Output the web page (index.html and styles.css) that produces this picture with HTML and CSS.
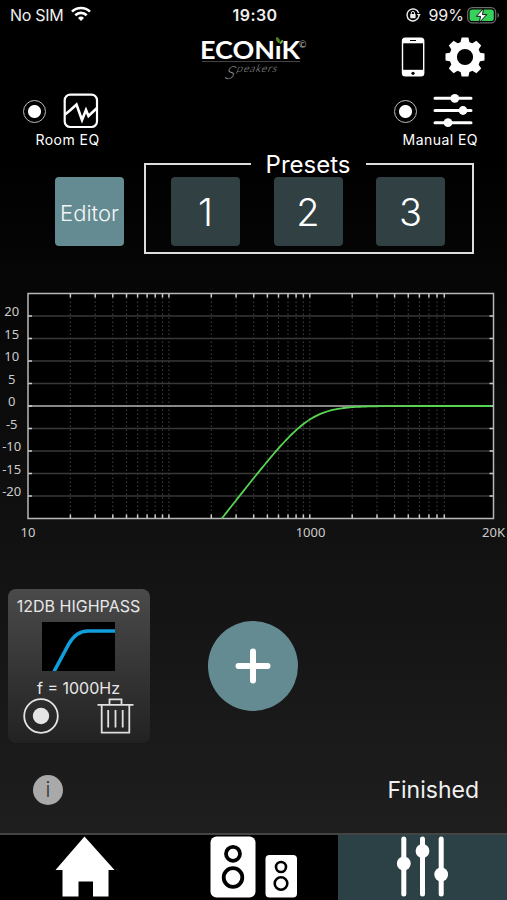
FILE: index.html
```
<!DOCTYPE html>
<html lang="en">
<head>
  <meta charset="UTF-8" />
  <title>Econik Speakers</title>
  <link rel="stylesheet" href="styles.css">
</head>
<body>
  <div class="statusbar">
    <div class="carrier">
      <span class="sim">No SIM</span>
      <svg width="20" height="16" viewBox="0 0 20 16" fill="none" stroke="#fff" stroke-width="2.7">
        <path d="M1 5.6a13 13 0 0 1 18 0" />
        <path d="M4.3 9.2a8.3 8.3 0 0 1 11.4 0" />
        <path d="M10 15l-3-3a4.4 4.4 0 0 1 6 0z" fill="#fff" stroke="none" />
      </svg>
    </div>
    <div class="clock">19:30</div>
    <div class="battery">
      <svg width="15" height="14" viewBox="0 0 15 14" fill="none" stroke="#eee" stroke-width="1.4">
        <path d="M12.9 8.2A6 6 0 1 1 12.7 5" />
        <path d="M10.8 6h4l-1.8 2.8z" fill="#eee" stroke="none" />
        <rect x="4.2" y="6" width="5.4" height="4.2" rx=".6" fill="#eee" stroke="none" />
        <path d="M5.3 6.5V5a1.6 1.6 0 0 1 3.2 0v1.5" stroke-width="1" />
      </svg>
      <span class="percent">99%</span>
      <svg width="33" height="17" viewBox="0 0 33 17">
        <rect x=".7" y=".7" width="28" height="15.2" rx="4.6" fill="none" stroke="#6c6c6c" stroke-width="1.2" />
        <rect x="2.6" y="2.6" width="24.2" height="11.4" rx="2.8" fill="#35d158" />
        <path d="M30.6 5.8v5c1.8-.7 1.8-4.3 0-5z" fill="#777" />
        <path d="M16.6 1.4L9.4 9.3h4.2l-1.4 6.3 7.6-8h-4.3z" fill="#fff" stroke="#000" stroke-width=".9" />
      </svg>
    </div>
  </div>

  <header class="header">
    <svg class="logo" width="110" height="54" viewBox="0 0 110 54">
      <text class="logo-name" x="0" y="23.5" textLength="100" lengthAdjust="spacingAndGlyphs">ECONıK</text>
      <path d="M79.5 8.5c-3-1.5-4-3.5-3.2-6.5 2.8.8 4.3 3 3.2 6.5z" fill="#528a20" />
      <path d="M80 9c-.3-2 .8-3.8 3-3.9.2 2.2-1 3.7-3 3.9z" fill="#91b722" />
      <text class="logo-mark" x="99" y="12.5">©</text>
      <path d="M2 26.5h98" stroke="#444" stroke-width="1" />
      <g transform="translate(24 42) skewX(-22)">
        <text class="logo-initial" x="0" y="1.5">S</text>
        <text class="logo-script" x="10" y="-5" textLength="40">peakers</text>
      </g>
    </svg>
    <div class="tools">
      <svg width="24" height="40" viewBox="0 0 24 40">
        <rect x=".8" y=".6" width="22.6" height="39" rx="3.5" fill="#fff" />
        <rect x="2.2" y="6.3" width="19.8" height="26.5" fill="#000" />
        <path d="M9 3.5h6" stroke="#000" stroke-width="1" />
        <circle cx="12" cy="36.3" r="1.6" fill="#000" />
      </svg>
      <svg width="40" height="40" viewBox="-20 -20 40 40">
        <defs>
          <path id="tooth" d="M-4.6-14l1.2-5.5h6.8L4.6-14z" />
        </defs>
        <g fill="#fff">
          <use href="#tooth" />
          <use href="#tooth" transform="rotate(45)" />
          <use href="#tooth" transform="rotate(90)" />
          <use href="#tooth" transform="rotate(135)" />
          <use href="#tooth" transform="rotate(180)" />
          <use href="#tooth" transform="rotate(225)" />
          <use href="#tooth" transform="rotate(270)" />
          <use href="#tooth" transform="rotate(315)" />
        </g>
        <circle r="11.8" fill="none" stroke="#fff" stroke-width="7.4" />
      </svg>
    </div>
  </header>

  <div class="modes">
    <div class="mode">
      <div class="mode-icons">
        <span class="radio"></span>
        <svg width="36" height="36" viewBox="0 0 36 36" fill="none" stroke="#fff">
          <rect x="1.7" y="1.7" width="32.3" height="32.3" rx="5.5" stroke-width="2.2" />
          <path d="M2 21.5l5.5-4.5 6-5.5L19 27l4-10 2.5 6 8.5-8" stroke-width="2.6" />
        </svg>
      </div>
      <div class="mode-name">Room EQ</div>
    </div>
    <div class="mode manual">
      <div class="mode-icons">
        <span class="radio"></span>
        <svg width="40" height="36" viewBox="0 0 40 36" fill="#fff" stroke="#fff" stroke-width="3" stroke-linecap="round">
          <path d="M2 5.3h36M2 17.5h36M2 29.7h36" />
          <g stroke="none">
            <circle cx="21.8" cy="5.3" r="4.4" />
            <circle cx="30" cy="17.5" r="4.4" />
            <circle cx="15" cy="29.7" r="4.4" />
          </g>
        </svg>
      </div>
      <div class="mode-name">Manual EQ</div>
    </div>
  </div>

  <div class="presets-row">
    <div class="key editor">Editor</div>
    <fieldset class="presets">
      <legend>Presets</legend>
      <div class="key">1</div>
      <div class="key">2</div>
      <div class="key">3</div>
    </fieldset>
  </div>

  <svg id="chart" class="chart" width="507" height="264" viewBox="0 280 507 264"></svg>

  <div class="filters">
    <div class="filter">
      <div class="filter-name">12DB HIGHPASS</div>
      <svg class="filter-curve" width="73" height="49" viewBox="0 0 73 49">
        <rect width="73" height="49" fill="#000" />
        <path d="M12 49.5L26.5 22.5C31 14.500 37 9 46 9H73" fill="none" stroke="#109fdc" stroke-width="3.6" />
      </svg>
      <div class="filter-freq">f = 1000Hz</div>
      <div class="filter-actions">
        <svg width="36" height="36" viewBox="0 0 36 36">
          <circle cx="18" cy="18" r="16.8" fill="none" stroke="#e4e4e4" stroke-width="1.8" />
          <circle cx="18" cy="18" r="8.2" fill="#e4e4e4" />
        </svg>
        <svg width="37" height="36" viewBox="0 0 37 36" fill="none" stroke="#e0e0e0" stroke-width="1.8">
          <path d="M.5 6.8h36M12.5 6.5V1.4h12v5.1M4.7 7v27.6h27.6V7M11.2 12v17.5M18.5 12v17.5M25.7 12v17.5" />
        </svg>
      </div>
    </div>
    <div class="add">
      <svg width="36" height="36" viewBox="0 0 36 36" stroke="#fff" stroke-width="6" stroke-linecap="round">
        <path d="M18 3.5v29M3.5 18h29" />
      </svg>
    </div>
  </div>

  <div class="footer">
    <div class="info">i</div>
    <div class="finished">Finished</div>
  </div>

  <nav class="tabs">
    <div class="tab">
      <svg width="60" height="61" viewBox="0 0 60 61" fill="#fff">
        <path d="M29.5.5L59.500 34H53.5V60.5H38V45.5H23.5V60.5H7.5V34H.5z" />
      </svg>
    </div>
    <div class="tab">
      <svg width="88" height="62" viewBox="0 0 88 62">
        <g fill="#fff">
          <rect x=".5" y=".5" width="45" height="61" rx="6" />
          <rect x="55.5" y="19" width="31.5" height="42.5" rx="4" />
        </g>
        <g fill="none" stroke="#000" stroke-width="3.8">
          <circle cx="23" cy="17.8" r="7" />
          <circle cx="23" cy="41.5" r="9.3" />
          <circle cx="71" cy="31" r="5" stroke-width="2.6" />
          <circle cx="71" cy="47.5" r="6.3" stroke-width="2.6" />
        </g>
      </svg>
    </div>
    <div class="tab active">
      <svg width="52" height="61" viewBox="0 0 52 61" fill="#fff" stroke="#fff" stroke-width="5" stroke-linecap="round">
        <path d="M6.8 3v55M25.5 3v55M44.2 3v55" />
        <g stroke="none">
          <circle cx="6.8" cy="27.5" r="6.9" />
          <circle cx="25.5" cy="15" r="6.9" />
          <circle cx="44.2" cy="38.5" r="6.9" />
        </g>
      </svg>
    </div>
  </nav>

  <script>
    const left = 28, right = 493.5, top_ = 293.5, bottom = 518.5;
    const decade = 140.9;

    const freqX = f => left + Math.log10(f / 10) * decade;
    const gainY = db => 406 - db * 4.5;

    let svg = `<rect class="plot" x="${left}" y="${top_}" width="${right - left}" height="${bottom - top_}" />`;

    // vertical lines, the last one is 9000 Hz
    for (let base = 10; base <= 1000; base *= 10) {
      for (let n = 2; n <= 10; n++) {
        if (base * n > 9000) break;
        const x = freqX(base * n).toFixed(1);
        svg += `<path class="dots" d="M${x} ${top_}V${bottom}" />`;
        svg += `<path class="tick" d="M${x} ${top_}v4M${x} ${bottom}v-4" />`;
      }
    }

    for (let db = 20; db >= -20; db -= 5) {
      const y = gainY(db);
      svg += `<path class="${db === 0 ? 'zero' : 'line'}" d="M${left} ${y}H${right}" />`;
      svg += `<path class="tick" d="M${left} ${y}h4M${right} ${y}h-4" />`;
      svg += `<text x="11.7" y="${y}">${db}</text>`;
    }

    svg += `<rect class="frame" x="${left}" y="${top_}" width="${right - left}" height="${bottom - top_}" />`;

    // 2nd order highpass at 1000 Hz
    const points = [];
    for (let x = 221.8; x <= right; x += 2) {
      const f = 10 * Math.pow(10, (x - left) / decade);
      const db = -10 * Math.log10(1 + Math.pow(1000 / f, 4));
      points.push(x.toFixed(1) + ',' + gainY(db).toFixed(2));
    }
    svg += `<polyline class="curve" points="${points.join(' ')}" />`;

    svg += `<text x="28" y="536.5">10</text><text x="310.5" y="536.5">1000</text><text x="493.5" y="536.5">20K</text>`;

    document.getElementById('chart').innerHTML = svg;
  </script>
</body>
</html>
```
FILE: styles.css
```
* {
  box-sizing: border-box;
}
body {
  margin: 0;
  width: 507px;
  height: 900px;
  overflow: hidden;
  font-family: Inter, "Liberation Sans", sans-serif;
  color: #fff;
  background: linear-gradient(#000 0, #000 150px, #1e1e1e 830px);
}
svg {
  display: block;
  flex: none;
}
.statusbar {
  display: grid;
  grid-template-columns: 1fr auto 1fr;
  align-items: center;
  height: 30px;
  padding: 0 7px 0 10px;
  font-size: 16px;
  color: #eee;
}
.carrier,
.battery {
  display: flex;
  align-items: center;
}
.carrier svg {
  margin: -2px 0 0 8px;
}
.sim {
  letter-spacing: -0.3px;
}
.clock {
  font-weight: 600;
  letter-spacing: 0.4px;
}
.battery {
  justify-content: flex-end;
}
.percent {
  margin: 0 3px 0 6px;
}
.battery svg:first-child {
  margin-right: 1px;
}
.header {
  display: flex;
  justify-content: space-between;
  height: 62px;
  padding: 5px 22px 0 200px;
}
.logo-name {
  font: 700 24px Lato, sans-serif;
  fill: #fff;
}
.logo-mark {
  font: 9px Lato, sans-serif;
  fill: #bbb;
}
.logo-initial {
  font: 300 18px Lato, sans-serif;
  fill: #8b8b8b;
}
.logo-script {
  font: 300 10.5px Lato, sans-serif;
  fill: #aaa;
}
.tools {
  display: flex;
  gap: 20px;
  padding-top: 2px;
}
.modes {
  display: flex;
  justify-content: space-between;
  height: 58px;
  padding: 0 29px 0 23px;
}
.mode-icons {
  display: flex;
  align-items: center;
  gap: 17px;
  height: 38px;
}
.radio {
  width: 23px;
  height: 23px;
  border: 1.5px solid #bbb;
  border-radius: 50%;
  background: radial-gradient(circle, #fff 6px, transparent 7px);
}
.mode-name {
  padding-left: 12.5px;
  font-size: 14px;
  letter-spacing: 0.45px;
  line-height: 19px;
}
.manual .mode-icons {
  gap: 16px;
  margin-left: -2px;
}
.manual .mode-name {
  padding-left: 6.5px;
}
.presets-row {
  display: flex;
  height: 130px;
  padding-left: 55px;
}
.key {
  display: flex;
  align-items: center;
  justify-content: center;
  width: 69px;
  height: 69px;
  border-radius: 4px;
  background: #304043;
  font-size: 38px;
  font-weight: 300;
}
.editor {
  margin-top: 27px;
  padding-top: 2px;
  background: #658b92;
  font-size: 22px;
  color: #f2f6f6;
}
.presets {
  display: flex;
  justify-content: space-between;
  width: 330px;
  height: 104px;
  margin: 0 0 0 20px;
  padding: 0 27px 0 25px;
  border: 2px solid #ddd;
}
.presets legend {
  width: 115px;
  height: 27px;
  margin: 0 auto;
  padding-top: 1px;
  font-size: 24px;
  line-height: 27px;
  text-align: center;
}
.chart text {
  font: 13px "Noto Sans", sans-serif;
  fill: #ccc;
  text-anchor: middle;
}
.plot {
  fill: #000;
}
.frame {
  fill: none;
  stroke: #b8b8b8;
  stroke-width: 1.5;
}
.line {
  stroke: #383838;
  stroke-width: 1.7;
}
.zero {
  stroke: #b5b5b5;
  stroke-width: 1.7;
}
.dots {
  stroke: #3a3a3a;
  stroke-width: 1.2;
  stroke-dasharray: 1.5 2.5;
}
.tick {
  stroke: #ccc;
  stroke-width: 1.5;
}
.curve {
  fill: none;
  stroke: #58d453;
  stroke-width: 1.8;
}
.filters {
  display: flex;
  height: 209px;
  padding: 45px 0 0 7.5px;
}
.filter {
  display: flex;
  flex-direction: column;
  align-items: center;
  width: 142px;
  height: 154px;
  padding-top: 7px;
  border-radius: 8px;
  background: linear-gradient(#4a4a4a, #222);
  color: #e8e8e8;
  font-size: 16px;
}
.filter-name {
  line-height: 20px;
}
.filter-curve {
  margin-top: 6px;
}
.filter-freq {
  margin-top: 7px;
  line-height: 20px;
}
.filter-actions {
  display: flex;
  justify-content: space-between;
  width: 111px;
}
.add {
  display: flex;
  align-items: center;
  justify-content: center;
  width: 90px;
  height: 90px;
  margin: 31.5px 0 0 58.5px;
  border-radius: 50%;
  background: #658b92;
}
.footer {
  display: flex;
  align-items: center;
  justify-content: space-between;
  height: 80px;
  padding: 0 28px 7px 33px;
}
.info {
  width: 30px;
  height: 30px;
  border-radius: 50%;
  background: #a9a9a9;
  color: #333;
  font-size: 21px;
  font-weight: 300;
  line-height: 30px;
  text-align: center;
}
.finished {
  font-size: 23px;
  color: #f0f0f0;
}
.tabs {
  display: grid;
  grid-template-columns: repeat(3, 1fr);
  height: 67px;
  border-top: 2px solid #444;
  background: #000;
}
.tab {
  display: flex;
  justify-content: center;
  padding-top: 1px;
}
.active {
  background: #2c4145;
}
```
